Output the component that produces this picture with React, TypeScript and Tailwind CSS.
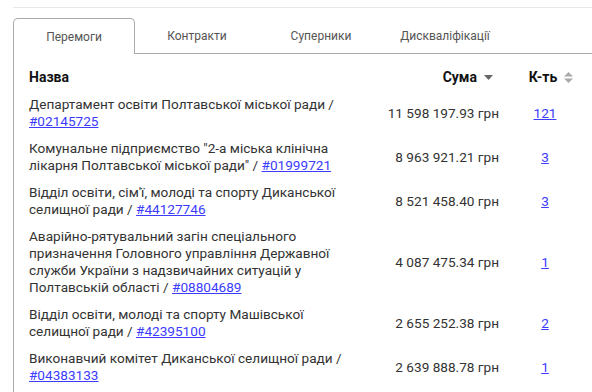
type Row = {
  name: string
  code: string
  sum: string
  count: string
}

const rows: Row[] = [
  { name: "Департамент освіти Полтавської міської ради /", code: "#02145725", sum: "11 598 197.93 грн", count: "121" },
  { name: "Комунальне підприємство \"2-а міська клінічна лікарня Полтавської міської ради\" /", code: "#01999721", sum: "8 963 921.21 грн", count: "3" },
  { name: "Відділ освіти, сім'ї, молоді та спорту Диканської селищної ради /", code: "#44127746", sum: "8 521 458.40 грн", count: "3" },
  { name: "Аварійно-рятувальний загін спеціального призначення Головного управління Державної служби України з надзвичайних ситуацій у Полтавській області /", code: "#08804689", sum: "4 087 475.34 грн", count: "1" },
  { name: "Відділ освіти, молоді та спорту Машівської селищної ради /", code: "#42395100", sum: "2 655 252.38 грн", count: "2" },
  { name: "Виконавчий комітет Диканської селищної ради /", code: "#04383133", sum: "2 639 888.78 грн", count: "1" },
]

const tabs = ["Перемоги", "Контракти", "Суперники", "Дискваліфікації"]

export default function App() {
  return (
    <div className="w-[592px] h-[392px] overflow-hidden bg-white font-['Roboto','Liberation_Sans',sans-serif] text-[#333]">
      <div className="ml-[13px] mt-[7px] border-t border-[#e8e8e8] pt-[10px]">
        {/* TABS */}
        <div className="flex h-[36px]">
          {tabs.map((t, i) =>
            i === 0 ? (
              <div key={t} className="w-[122px] flex items-center justify-center border-l border-t border-r border-[#aaa] rounded-t-[5px] text-[12px] text-[#555]">
                {t}
              </div>
            ) : (
              <div key={t} className="w-[124px] flex items-center justify-center border-b border-[#aaa] text-[12px] text-[#555]">
                {t}
              </div>
            )
          )}
          <div className="flex-1 border-b border-[#aaa]"></div>
        </div>

        {/* TABLE */}
        <div className="border-l border-[#aaa] pl-[15px] pt-[10px] h-[400px]">
          <div className="grid grid-cols-[326px_150px_80px] text-[14px] font-bold text-[#111] leading-[17px] py-[5px]">
            <div>Назва</div>
            <div className="flex items-center justify-end pr-[12px] gap-[7px]">
              Сума
              <svg width="9" height="5" viewBox="0 0 9 5"><path d="M0 0h9L4.5 5z" fill="#666" /></svg>
            </div>
            <div className="flex items-center justify-center pl-[12px] gap-[7px]">
              К-ть
              <svg width="9" height="11" viewBox="0 0 9 11"><path d="M0 4.5h9L4.5 0z M0 6.5h9L4.5 11z" fill="#aaa" /></svg>
            </div>
          </div>

          {rows.map((r) => (
            <div key={r.code} className="grid grid-cols-[326px_150px_80px] text-[13.6px] leading-[17px] py-[5px]">
              <div>
                {r.name} <a href="#" className="text-[#3c3cff] underline">{r.code}</a>
              </div>
              <div className="flex items-center justify-end pr-[6px]">{r.sum}</div>
              <div className="flex items-center justify-center">
                <a href="#" className="text-[#3c3cff] underline">{r.count}</a>
              </div>
            </div>
          ))}
        </div>
      </div>
    </div>
  )
}
